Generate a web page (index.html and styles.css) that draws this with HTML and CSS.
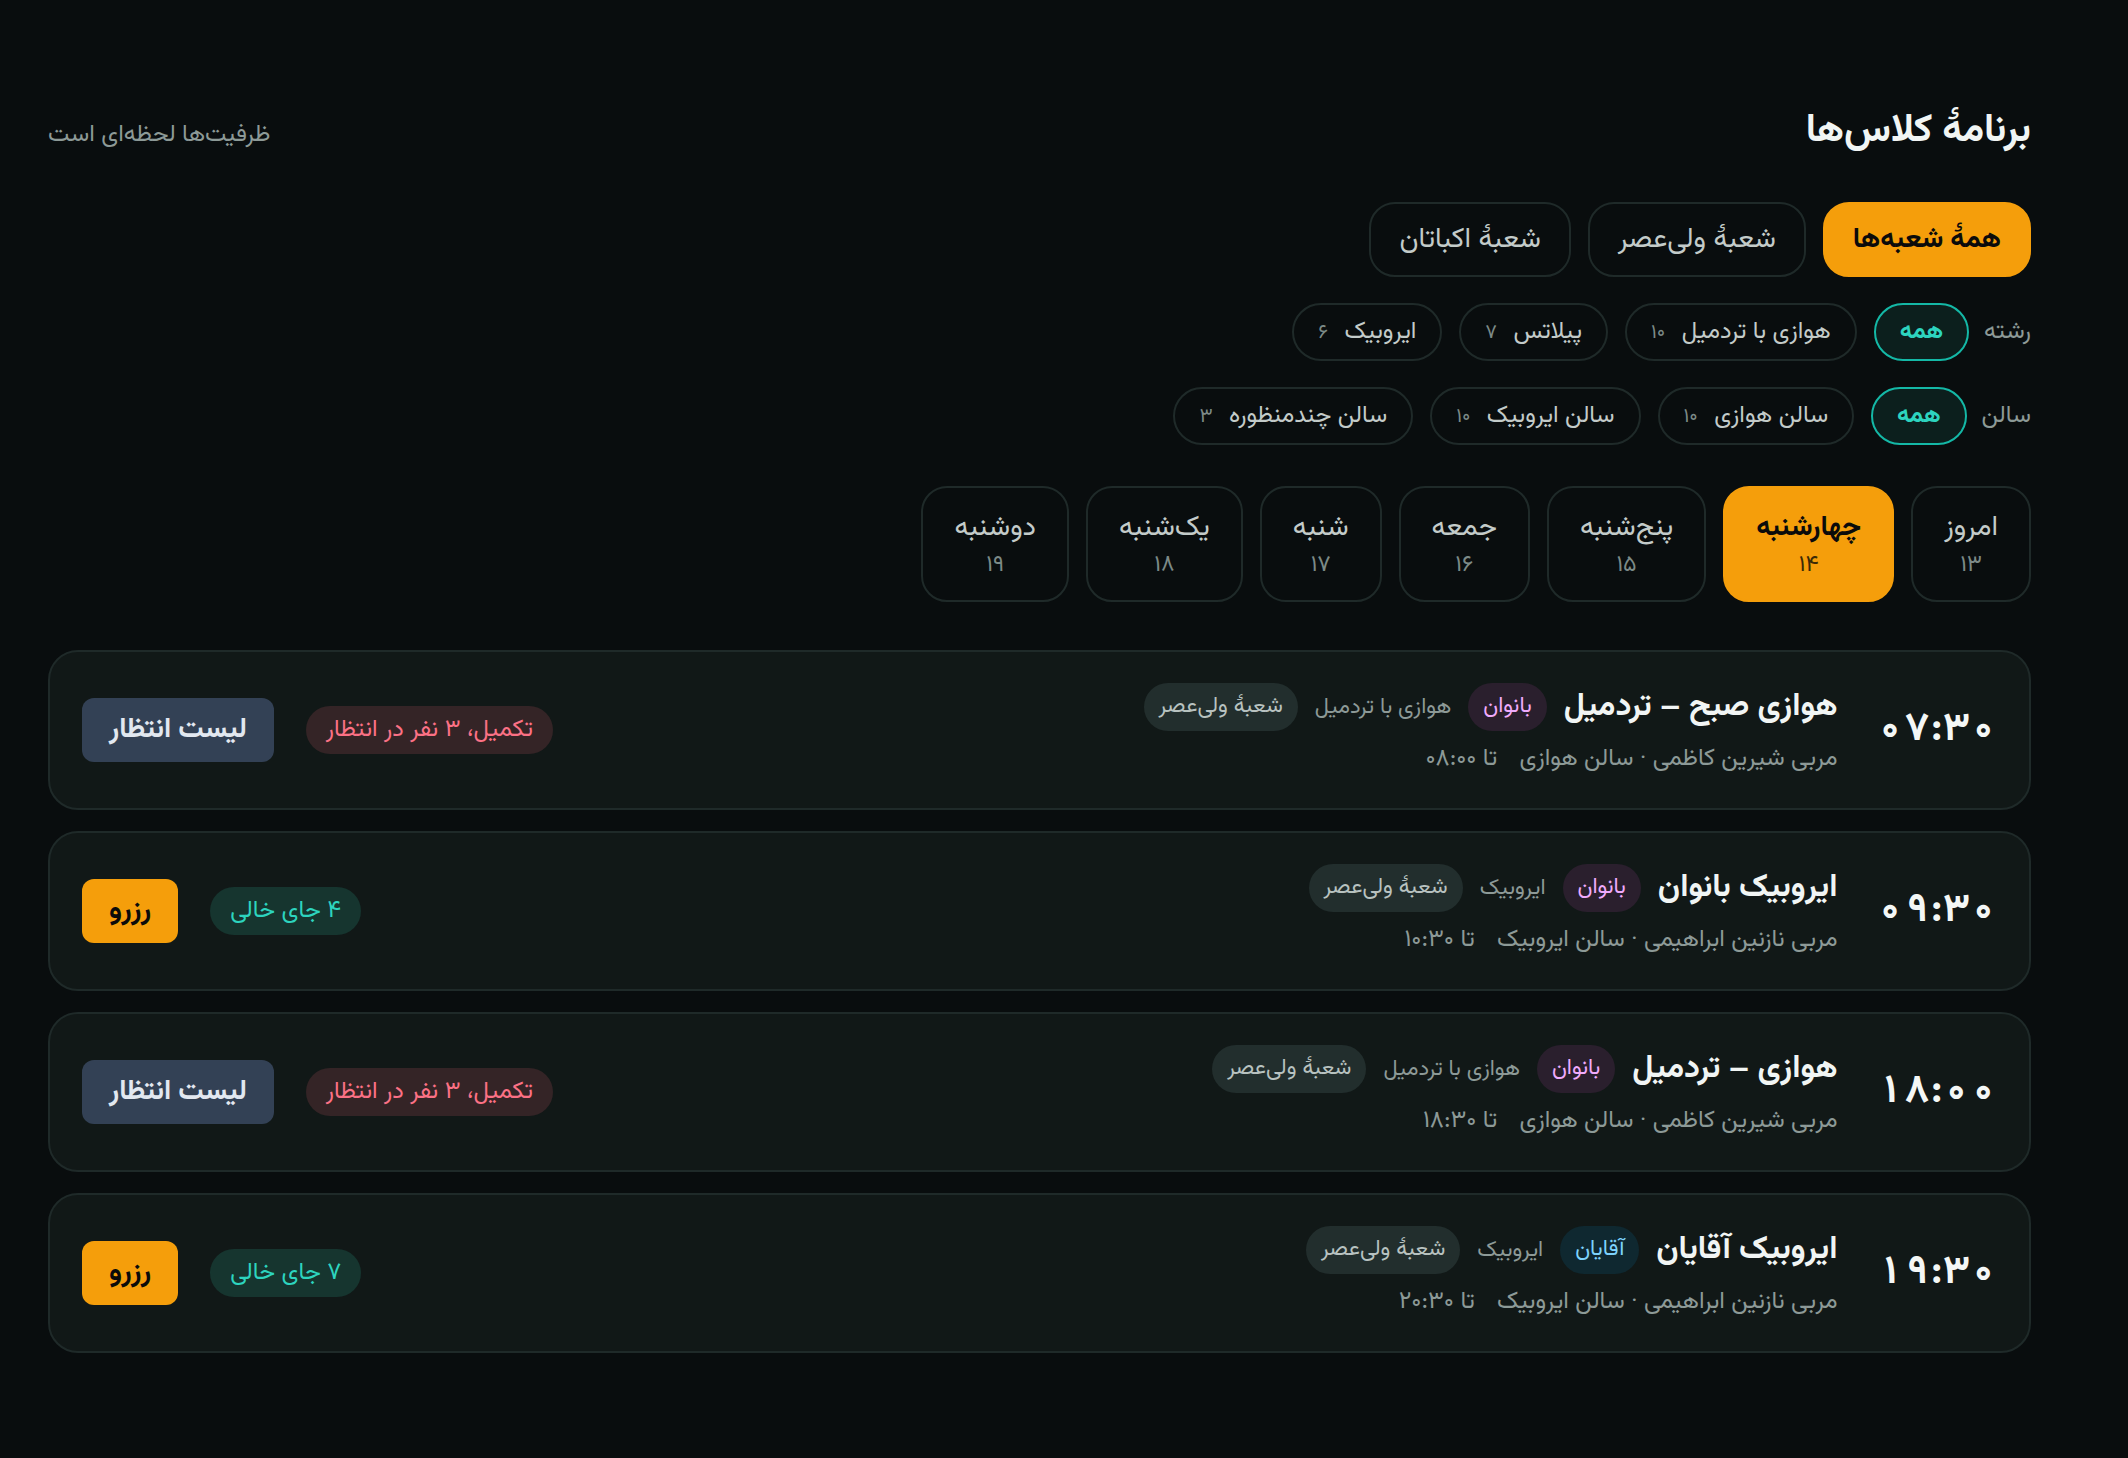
FILE: index.html
```html
<!DOCTYPE html>
<html lang="fa" dir="rtl">
<head>
    <meta charset="UTF-8">
    <meta name="viewport" content="width=device-width, initial-scale=1.0">
    <title>برنامهٔ کلاس‌ها</title>
    <link rel="stylesheet" href="styles.css">
</head>
<body>
    <div class="page">
        <header class="top">
            <h1>برنامهٔ کلاس‌ها</h1>
            <p class="note">ظرفیت‌ها لحظه‌ای است</p>
        </header>

        <nav class="branches">
            <button class="branch active">همهٔ شعبه‌ها</button>
            <button class="branch">شعبهٔ ولی‌عصر</button>
            <button class="branch">شعبهٔ اکباتان</button>
        </nav>

        <div class="filters">
            <div class="filter-row">
                <span class="filter-label">رشته</span>
                <button class="chip active">همه</button>
                <button class="chip">هوازی با تردمیل <span class="count">۱۰</span></button>
                <button class="chip">پیلاتس <span class="count">۷</span></button>
                <button class="chip">ایروبیک <span class="count">۶</span></button>
            </div>
            <div class="filter-row">
                <span class="filter-label">سالن</span>
                <button class="chip active">همه</button>
                <button class="chip">سالن هوازی <span class="count">۱۰</span></button>
                <button class="chip">سالن ایروبیک <span class="count">۱۰</span></button>
                <button class="chip">سالن چندمنظوره <span class="count">۳</span></button>
            </div>
        </div>

        <div class="days">
            <button class="day"><span class="day-name">امروز</span><span class="day-date">۱۳</span></button>
            <button class="day active"><span class="day-name">چهارشنبه</span><span class="day-date">۱۴</span></button>
            <button class="day"><span class="day-name">پنج‌شنبه</span><span class="day-date">۱۵</span></button>
            <button class="day"><span class="day-name">جمعه</span><span class="day-date">۱۶</span></button>
            <button class="day"><span class="day-name">شنبه</span><span class="day-date">۱۷</span></button>
            <button class="day"><span class="day-name">یک‌شنبه</span><span class="day-date">۱۸</span></button>
            <button class="day"><span class="day-name">دوشنبه</span><span class="day-date">۱۹</span></button>
        </div>

        <section class="classes">
            <article class="class-card">
                <div class="class-main">
                    <div class="class-time">۰۷:۳۰</div>
                    <div class="class-info">
                        <div class="class-head">
                            <h2>هوازی صبح – تردمیل</h2>
                            <span class="tag tag-women">بانوان</span>
                            <span class="kind">هوازی با تردمیل</span>
                            <span class="tag tag-branch">شعبهٔ ولی‌عصر</span>
                        </div>
                        <div class="class-meta">مربی شیرین کاظمی · سالن هوازی <span class="until">تا ۰۸:۰۰</span></div>
                    </div>
                </div>
                <div class="class-actions">
                    <span class="status status-full">تکمیل، ۳ نفر در انتظار</span>
                    <button class="btn btn-wait">لیست انتظار</button>
                </div>
            </article>

            <article class="class-card">
                <div class="class-main">
                    <div class="class-time">۰۹:۳۰</div>
                    <div class="class-info">
                        <div class="class-head">
                            <h2>ایروبیک بانوان</h2>
                            <span class="tag tag-women">بانوان</span>
                            <span class="kind">ایروبیک</span>
                            <span class="tag tag-branch">شعبهٔ ولی‌عصر</span>
                        </div>
                        <div class="class-meta">مربی نازنین ابراهیمی · سالن ایروبیک <span class="until">تا ۱۰:۳۰</span></div>
                    </div>
                </div>
                <div class="class-actions">
                    <span class="status status-open">۴ جای خالی</span>
                    <button class="btn btn-book">رزرو</button>
                </div>
            </article>

            <article class="class-card">
                <div class="class-main">
                    <div class="class-time">۱۸:۰۰</div>
                    <div class="class-info">
                        <div class="class-head">
                            <h2>هوازی – تردمیل</h2>
                            <span class="tag tag-women">بانوان</span>
                            <span class="kind">هوازی با تردمیل</span>
                            <span class="tag tag-branch">شعبهٔ ولی‌عصر</span>
                        </div>
                        <div class="class-meta">مربی شیرین کاظمی · سالن هوازی <span class="until">تا ۱۸:۳۰</span></div>
                    </div>
                </div>
                <div class="class-actions">
                    <span class="status status-full">تکمیل، ۳ نفر در انتظار</span>
                    <button class="btn btn-wait">لیست انتظار</button>
                </div>
            </article>

            <article class="class-card">
                <div class="class-main">
                    <div class="class-time">۱۹:۳۰</div>
                    <div class="class-info">
                        <div class="class-head">
                            <h2>ایروبیک آقایان</h2>
                            <span class="tag tag-men">آقایان</span>
                            <span class="kind">ایروبیک</span>
                            <span class="tag tag-branch">شعبهٔ ولی‌عصر</span>
                        </div>
                        <div class="class-meta">مربی نازنین ابراهیمی · سالن ایروبیک <span class="until">تا ۲۰:۳۰</span></div>
                    </div>
                </div>
                <div class="class-actions">
                    <span class="status status-open">۷ جای خالی</span>
                    <button class="btn btn-book">رزرو</button>
                </div>
            </article>
        </section>
    </div>
</body>
</html>
```

FILE: styles.css
```css
body {
    margin: 0;
    background-color: #090d0e;
    color: #e9eeed;
    font-family: 'Vazirmatn', 'Noto Sans Arabic', 'DejaVu Sans', sans-serif;
}
button {
    font-family: inherit;
    cursor: pointer;
}
.page {
    padding: 106px 97px 80px 48px;
}
.top {
    display: flex;
    justify-content: space-between;
    align-items: center;
    height: 50px;
    margin-bottom: 46px;
}
.top h1 {
    margin: 0;
    font-size: 39px;
    font-weight: 700;
    color: #f1f5f4;
}
.note {
    margin: 8px 0 0;
    font-size: 24px;
    color: #8d9a97;
}
.branches {
    display: flex;
    gap: 17px;
    margin-bottom: 26px;
}
.branch {
    height: 75px;
    padding: 0 28px;
    border: 2px solid #1f2a29;
    border-radius: 26px;
    background: transparent;
    color: #c3cbc9;
    font-size: 28px;
}
.branch.active {
    background-color: #f59e0b;
    border-color: #f59e0b;
    color: #0b0b0b;
    font-weight: 700;
}
.filters {
    display: flex;
    flex-direction: column;
    gap: 26px;
}
.filter-row {
    display: flex;
    align-items: center;
    gap: 17px;
}
.filter-label {
    margin-left: -2px;
    font-size: 24px;
    color: #8d9a97;
}
.chip {
    height: 58px;
    padding: 0 24px;
    border: 2px solid #1f2a29;
    border-radius: 29px;
    background: transparent;
    color: #c3cbc9;
    font-size: 24px;
}
.chip .count {
    margin-right: 10px;
    font-size: 20px;
    color: #7c8a87;
}
.chip.active {
    background-color: #0c1f1d;
    border-color: #14b8a6;
    color: #2dd4bf;
    font-weight: 700;
}
.days {
    display: flex;
    gap: 17px;
    margin-top: 41px;
}
.day {
    display: flex;
    flex-direction: column;
    align-items: center;
    justify-content: center;
    height: 116px;
    padding: 0 31px;
    border: 2px solid #1f2a29;
    border-radius: 26px;
    background: transparent;
    color: #c3cbc9;
}
.day-name {
    font-size: 28px;
}
.day-date {
    margin-top: -3px;
    font-size: 23px;
    color: #7c8a87;
}
.day.active {
    background-color: #f59e0b;
    border-color: #f59e0b;
    color: #0b0b0b;
    font-weight: 700;
}
.day.active .day-date {
    color: #3b2a06;
    font-weight: 400;
}
.classes {
    display: flex;
    flex-direction: column;
    gap: 21px;
    margin-top: 48px;
}
.class-card {
    display: flex;
    justify-content: space-between;
    align-items: center;
    height: 160px;
    box-sizing: border-box;
    padding: 0 32px;
    background-color: #111817;
    border: 2px solid #1f2a29;
    border-radius: 30px;
}
.class-main {
    display: flex;
    align-items: center;
    gap: 39px;
}
.class-time {
    font-size: 40px;
    font-weight: 700;
    font-variant-numeric: tabular-nums;
    letter-spacing: 1px;
    color: #f4f7f6;
}
.class-info {
    display: flex;
    flex-direction: column;
    gap: 8px;
}
.class-head {
    display: flex;
    align-items: center;
    gap: 17px;
}
.class-head h2 {
    margin: 0;
    font-size: 32px;
    font-weight: 700;
    color: #f1f5f4;
}
.tag {
    height: 48px;
    line-height: 48px;
    padding: 0 15px;
    border-radius: 24px;
    font-size: 22px;
}
.tag-women {
    background-color: #2a1f2d;
    color: #f0abfc;
}
.tag-men {
    background-color: #0f2830;
    color: #7dd3fc;
}
.tag-branch {
    background-color: #222e2d;
    color: #b8c2c0;
}
.kind {
    font-size: 22px;
    color: #8d9a97;
}
.class-meta {
    font-size: 24px;
    color: #8d9a97;
}
.until {
    margin-right: 16px;
}
.class-actions {
    display: flex;
    align-items: center;
    gap: 32px;
}
.status {
    height: 48px;
    line-height: 48px;
    padding: 0 20px;
    border-radius: 24px;
    font-size: 24px;
}
.status-full {
    background-color: #342426;
    color: #fb7185;
}
.status-open {
    background-color: #16352f;
    color: #2dd4bf;
}
.btn {
    height: 64px;
    padding: 0 27px;
    border: none;
    border-radius: 12px;
    font-size: 28px;
    font-weight: 700;
}
.btn-wait {
    background-color: #334155;
    color: #e2e8f0;
}
.btn-book {
    background-color: #f59e0b;
    color: #0b0b0b;
}
```
